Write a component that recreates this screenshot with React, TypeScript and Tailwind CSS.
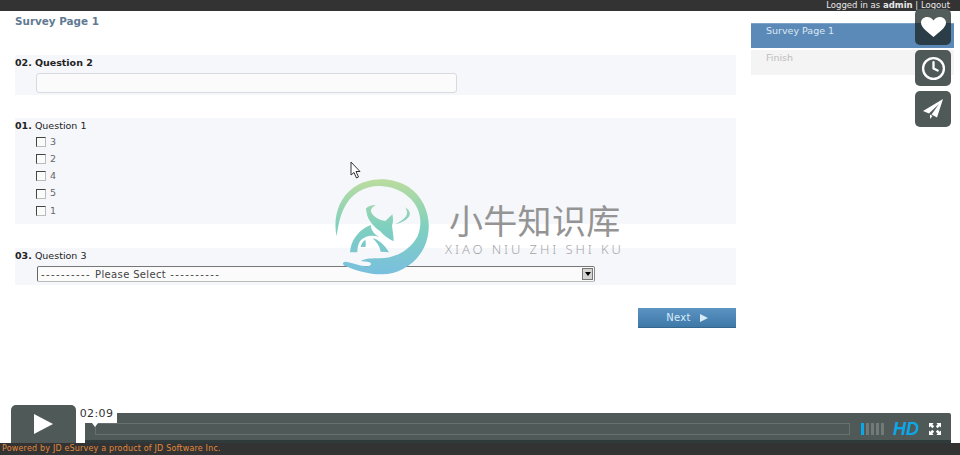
import { Clock } from "lucide-react";

const Section = ({ className, children }: { className: string; children: React.ReactNode }) => (
  <div className={`bg-[#f6f7fb] ${className}`}>{children}</div>
);

const Label = ({ n, t, boldT }: { n: string; t: string; boldT?: boolean }) => (
  <div className="text-[9.5px] leading-[12px] text-[#222]">
    <span className="font-bold">{n}</span> <span className={boldT ? "font-bold" : ""}>{t}</span>
  </div>
);

const Check = ({ v }: { v: string }) => (
  <div className="flex items-center h-[17.3px] text-[9.5px] text-[#666]">
    <span className="w-[10px] h-[10px] border border-[#bbb] border-t-[#444] border-l-[#444] bg-[#fbfbfb]" />
    <span className="ml-[4px]">{v}</span>
  </div>
);

function Logo() {
  return (
    <svg className="absolute left-[330px] top-[175px]" width="105" height="105" viewBox="0 0 315 315" fill="none">
      <defs>
        <linearGradient id="g" x1="0" y1="12" x2="0" y2="298" gradientUnits="userSpaceOnUse">
          <stop offset="0" stopColor="#bcdc9e" />
          <stop offset="0.5" stopColor="#7fd0bf" />
          <stop offset="1" stopColor="#79bfdf" />
        </linearGradient>
      </defs>
      <path
        fill="url(#g)"
        d="M20 184 C8 130 25 70 70 38 C115 5 185 4 235 35 C285 68 305 130 293 185 C280 250 220 298 155 298 C115 298 75 285 43 272 C36 268 38 259 48 260 C65 262 85 272 108 274 C122 275 128 266 118 262 C110 259 98 259 92 258 C105 250 130 249 150 250 C195 250 240 225 262 185 C280 145 272 95 235 65 C195 30 130 22 85 50 C45 75 28 120 20 184Z"
      />
      <path
        fill="url(#g)"
        d="M108 100 C116 93 126 90 138 90 C128 96 120 102 124 112 C130 126 148 136 166 138 L187 118 C190 130 190 142 186 152 C188 168 191 184 191 199 C175 192 160 180 150 168 C135 158 118 140 112 122 C110 114 108 106 108 100Z"
      />
      <path fill="url(#g)" d="M225 97 C238 104 244 116 236 126 C226 138 210 144 196 148 C210 140 224 132 230 120 C233 112 230 104 225 97Z" />
      <path
        fill="url(#g)"
        d="M60 232 C62 205 75 182 95 166 C104 158 114 153 122 150 C122 160 128 172 138 180 L148 186 C125 178 105 182 92 196 C84 206 82 220 82 232Z"
      />
      <path
        fill="url(#g)"
        d="M128 190 C145 192 165 212 177 232 L152 230 C150 215 140 202 128 190Z M92 216 C94 205 100 198 106 194 C108 204 108 212 106 216Z"
      />
    </svg>
  );
}

export default function App() {
  return (
    <div className="relative h-[455px] w-[960px] overflow-hidden bg-white font-['DejaVu_Sans','Liberation_Sans',sans-serif]">
      <div className="h-[11px] bg-[#333333] flex justify-end items-center pr-[10px] text-[8.5px] leading-[11px] text-[#e8e8e8]">
        <span>
          Logged in as <b>admin</b> | Logout
        </span>
      </div>

      <div className="flex pl-[15px]">
        <div className="w-[721px]">
          <div className="pt-[3px] h-[44px] text-[10.4px] leading-[14px] font-bold text-[#5f7a92]">Survey Page 1</div>
          <Section className="h-[40px] pt-[2px]">
            <Label n="02." t="Question 2" boldT />
            <div className="ml-[21px] mt-[4px] w-[421px] h-[20px] rounded-[3px] border border-[#d8dae0] bg-[#fbfbfb]" />
          </Section>
          <Section className="mt-[23px] h-[106px] pt-[2px]">
            <Label n="01." t="Question 1" />
            <div className="ml-[21px] mt-[1px]">
              <Check v="3" />
              <Check v="2" />
              <Check v="4" />
              <Check v="5" />
              <Check v="1" />
            </div>
          </Section>
          <Section className="mt-[24px] h-[37px] pt-[2px]">
            <Label n="03." t="Question 3" />
            <div className="ml-[22px] mt-[4px] w-[558px] h-[16px] flex items-center justify-between border border-[#666] border-t-[#777] border-b-[#bbb] border-r-[#888] rounded-[2px] bg-[#fbfbfb] pl-[3px] pr-[1px] text-[10px] text-[#444]">
              <span className="whitespace-pre flex">
                <span className="tracking-[1.4px]">----------</span>
                <span className="tracking-[0.35px] ml-[4px]">Please Select</span>
                <span className="tracking-[1.4px] ml-[4px]">----------</span>
              </span>
              <span className="w-[11px] h-[12px] bg-[#d4d4d0] border border-[#777] flex items-center justify-center">
                <span className="w-0 h-0 border-x-[3px] border-x-transparent border-t-[4px] border-t-black" />
              </span>
            </div>
          </Section>
          <div className="flex justify-end mt-[23px]">
            <div className="w-[98px] h-[20px] flex items-center justify-center gap-[9px] bg-[linear-gradient(#5b93c3,#3e79a8)] border-b border-[#35688f] text-[10px] tracking-[0.3px] font-normal text-[#d8ecf8]">
              <span>Next</span>
              <span className="w-0 h-0 border-y-[4px] border-y-transparent border-l-[8px] border-l-[#d8ecf8]" />
            </div>
          </div>
        </div>

        <div className="ml-[15px] w-[203px] mt-[12px] text-[9.5px] leading-[12px]">
          <div className="h-[25px] bg-[#5c8ab8] border-t border-[#7fa3c7] text-[#dbe8f3] pl-[15px] pt-[1px]">Survey Page 1</div>
          <div className="h-[25px] bg-[#f4f4f4] text-[#bdbdbd] pl-[15px] pt-[2px] mt-[2px]">Finish</div>
        </div>
      </div>

      {/* Side buttons */}
      <div className="absolute left-[915px] top-[9px] flex flex-col gap-[5px]">
        <div className="w-[36px] h-[36px] rounded-[5px] bg-[linear-gradient(#525c5b_14px,#2b3d46_14px)] flex items-center justify-center">
          <svg width="25" height="20" viewBox="0 0 25 20" fill="#fff">
            <path d="M12.5 20 C8 16 0 11 0 5.8 C0 2.2 3 0 6 0 C9 0 11.3 1.6 12.5 3.6 C13.7 1.6 16 0 19 0 C22 0 25 2.2 25 5.8 C25 11 17 16 12.5 20Z" />
          </svg>
        </div>
        <div className="w-[36px] h-[36px] rounded-[5px] bg-[#4f5958] flex items-center justify-center">
          <Clock size={25} stroke="#fff" strokeWidth={2.2} />
        </div>
        <div className="w-[36px] h-[36px] rounded-[5px] bg-[#4f5958] flex items-center justify-center">
          <svg width="22" height="22" viewBox="0 0 22 22" fill="#fff">
            <path d="M21 1 L1 13 L7 15.5 L17 6 L9.5 16.5 L15 19.5Z" />
            <path d="M8 16.5 L8 21 L10.5 18Z" />
          </svg>
        </div>
      </div>

      {/* Mouse cursor */}
      <svg className="absolute left-[350px] top-[161px]" width="12" height="19" viewBox="0 0 12 19">
        <path d="M1 1 L1 14 L4 11.5 L6.5 17 L8.5 16 L6 10.5 L10 10.5Z" fill="#fff" stroke="#333" strokeWidth="1" />
      </svg>

      {/* Watermark */}
      <Logo />
      <div className="absolute left-[449px] top-[200px] text-[34px] leading-[40px] tracking-[0.3px] text-[#949494] font-['Noto_Sans_CJK_SC',sans-serif] whitespace-nowrap">
        小牛知识库
      </div>
      <div className="absolute left-[445px] top-[243px] text-[13px] leading-[13px] tracking-[2.9px] text-[#a6a6a6] font-['Noto_Sans',sans-serif] font-light whitespace-nowrap">
        XIAO NIU ZHI SHI KU
      </div>

      {/* Footer */}
      <div className="absolute left-0 right-0 bottom-0 h-[12px] bg-[#333] text-[8px] leading-[12px] tracking-[0.18px] text-[#e08a3c] pl-[2px]">
        Powered by JD eSurvey a product of JD Software Inc.
      </div>

      {/* Video controls */}
      <div className="absolute left-[11px] top-[405px] w-[65px] h-[38px] rounded-t-[5px] bg-[#4f5958] flex items-center justify-center">
        <span className="w-0 h-0 border-y-[10px] border-y-transparent border-l-[19px] border-l-white" />
      </div>
      <div className="absolute left-[85px] top-[413px] w-[866px] h-[30px] rounded-tr-[2px] bg-[#4f5958] border-b-[3px] border-[#2f3a3a] flex items-center pl-[10px] pt-[5px]">
        <div className="w-[755px] h-[12px] border border-[#667170]" />
        <div className="ml-[11px] flex gap-[2px]">
          <span className="w-[3px] h-[12px] bg-[#0aa8e8]" />
          <span className="w-[3px] h-[12px] bg-[#727a79]" />
          <span className="w-[3px] h-[12px] bg-[#727a79]" />
          <span className="w-[3px] h-[12px] bg-[#727a79]" />
          <span className="w-[3px] h-[12px] bg-[#727a79]" />
        </div>
        <span className="ml-[9px] text-[18px] leading-[16px] font-bold italic text-[#0aa8e8] font-['Liberation_Sans',sans-serif]">HD</span>
        <svg className="ml-[10px]" width="12" height="12" viewBox="0 0 13 13" fill="#fff">
          <path d="M0 0 H5 L3.6 1.6 L5.6 3.6 L3.6 5.6 L1.6 3.6 L0 5Z" />
          <path d="M13 0 H8 L9.4 1.6 L7.4 3.6 L9.4 5.6 L11.4 3.6 L13 5Z" />
          <path d="M0 13 H5 L3.6 11.4 L5.6 9.4 L3.6 7.4 L1.6 9.4 L0 8Z" />
          <path d="M13 13 H8 L9.4 11.4 L7.4 9.4 L9.4 7.4 L11.4 9.4 L13 8Z" />
        </svg>
      </div>
      <div className="absolute left-[76px] top-[404px] w-[41px] h-[19px] bg-white text-[11px] leading-[19px] tracking-[0.4px] text-center text-[#333]">
        02:09
        <span className="absolute left-[16px] top-[19px] w-0 h-0 border-x-[3px] border-x-transparent border-t-[4px] border-t-white" />
      </div>
    </div>
  );
}
